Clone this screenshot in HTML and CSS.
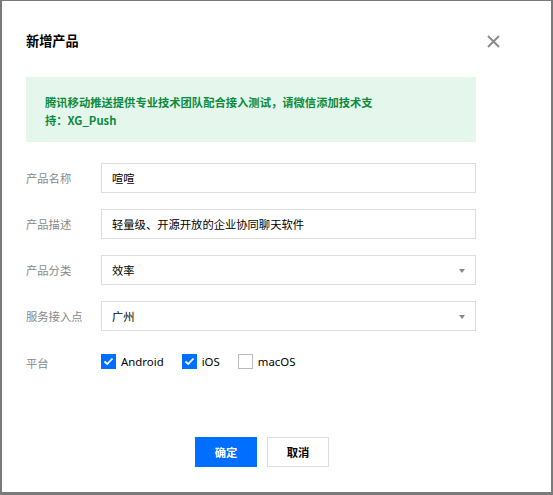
FILE: index.html
```html
<!DOCTYPE html>
<html lang="zh-CN">
<head>
<meta charset="utf-8">
<link rel="stylesheet" href="styles.css">
</head>
<body>
<div class="dialog">
  <div class="header">
    <h2 class="title">新增产品</h2>
    <svg class="close" width="13" height="13" viewBox="0 0 13 13"><path d="M1 1 L12 12 M12 1 L1 12" stroke="#888" stroke-width="1.8" fill="none"/></svg>
  </div>
  <div class="notice"><p class="notice-text">腾讯移动推送提供专业技术团队配合接入测试，请微信添加技术支持：XG_Push</p></div>
  <div class="form">
    <div class="row">
      <span class="label">产品名称</span>
      <div class="field">喧喧</div>
    </div>
    <div class="row">
      <span class="label">产品描述</span>
      <div class="field">轻量级、开源开放的企业协同聊天软件</div>
    </div>
    <div class="row">
      <span class="label">产品分类</span>
      <div class="field select">效率<span class="caret"></span></div>
    </div>
    <div class="row">
      <span class="label">服务接入点</span>
      <div class="field select">广州<span class="caret"></span></div>
    </div>
    <div class="row platform">
      <span class="label label-platform">平台</span>
      <div class="checks">
        <span class="check"><span class="box on"><svg width="11" height="9" viewBox="0 0 11 9"><path d="M1.5 4.5 L4.2 7 L9.5 1.5" stroke="#fff" stroke-width="1.8" fill="none"/></svg></span>Android</span>
        <span class="check"><span class="box on"><svg width="11" height="9" viewBox="0 0 11 9"><path d="M1.5 4.5 L4.2 7 L9.5 1.5" stroke="#fff" stroke-width="1.8" fill="none"/></svg></span>iOS</span>
        <span class="check"><span class="box"></span>macOS</span>
      </div>
    </div>
  </div>
  <div class="footer">
    <button class="btn primary">确定</button>
    <button class="btn">取消</button>
  </div>
</div>
</body>
</html>
```
FILE: styles.css
```css
html, body {
  margin: 0;
  padding: 0;
  background: #7a7a7a;
  height: 495px;
  overflow: hidden;
}
body {
  padding: 1px 2px 3px 2px;
  box-sizing: border-box;
  font-family: "Noto Sans CJK SC", "Noto Sans", sans-serif;
  font-size: 11.3px;
}
.dialog {
  background: #fff;
  height: 491px;
  box-sizing: border-box;
  padding: 0 0 0 24px;
  position: relative;
}
.header {
  display: flex;
  align-items: center;
  justify-content: space-between;
  height: 76px;
  padding-right: 51px;
  padding-top: 4px;
  box-sizing: border-box;
}
.title {
  margin: 0;
  font-size: 13.2px;
  font-weight: 700;
  color: #000;
  line-height: 20px;
}
.close {
  display: block;
}
.notice {
  width: 450px;
  height: 65px;
  background: #e5f6ec;
  box-sizing: border-box;
  padding: 16px 0 0 19px;
}
.notice-text {
  margin: 0;
  width: 335px;
  color: #0d8a3c;
  font-weight: 700;
  line-height: 18px;
}
.form {
  margin-top: 21px;
  display: flex;
  flex-direction: column;
  gap: 16px;
}
.row {
  display: flex;
  align-items: center;
}
.label {
  width: 75px;
  color: #888;
}
.field {
  width: 375px;
  height: 30px;
  box-sizing: border-box;
  border: 1px solid #ddd;
  padding: 0 10px;
  display: flex;
  align-items: center;
  color: #000;
  position: relative;
}
.caret {
  position: absolute;
  right: 10px;
  top: 13px;
  width: 0;
  height: 0;
  border-left: 3.5px solid transparent;
  border-right: 3.5px solid transparent;
  border-top: 4px solid #888;
}
.platform {
  height: 28px;
}
.label-platform {
  padding-top: 3px;
}
.checks {
  display: flex;
  align-items: center;
  gap: 18px;
  font-family: "Noto Sans", sans-serif;
  font-size: 11.4px;
  color: #000;
}
.check {
  display: flex;
  align-items: center;
  gap: 5px;
}
.box {
  width: 15px;
  height: 15px;
  box-sizing: border-box;
  border: 1px solid #bbb;
  display: flex;
  align-items: center;
  justify-content: center;
}
.box.on {
  background: #006eff;
  border-color: #006eff;
}
.footer {
  position: absolute;
  left: 193px;
  top: 436px;
  display: flex;
  gap: 10px;
}
.btn {
  width: 62px;
  height: 30px;
  border: 1px solid #ddd;
  background: #fff;
  color: #000;
  font-family: "Noto Sans CJK SC", sans-serif;
  font-size: 11.3px;
  font-weight: 700;
  padding: 0;
}
.btn.primary {
  background: #006eff;
  border-color: #006eff;
  color: #fff;
}
```
